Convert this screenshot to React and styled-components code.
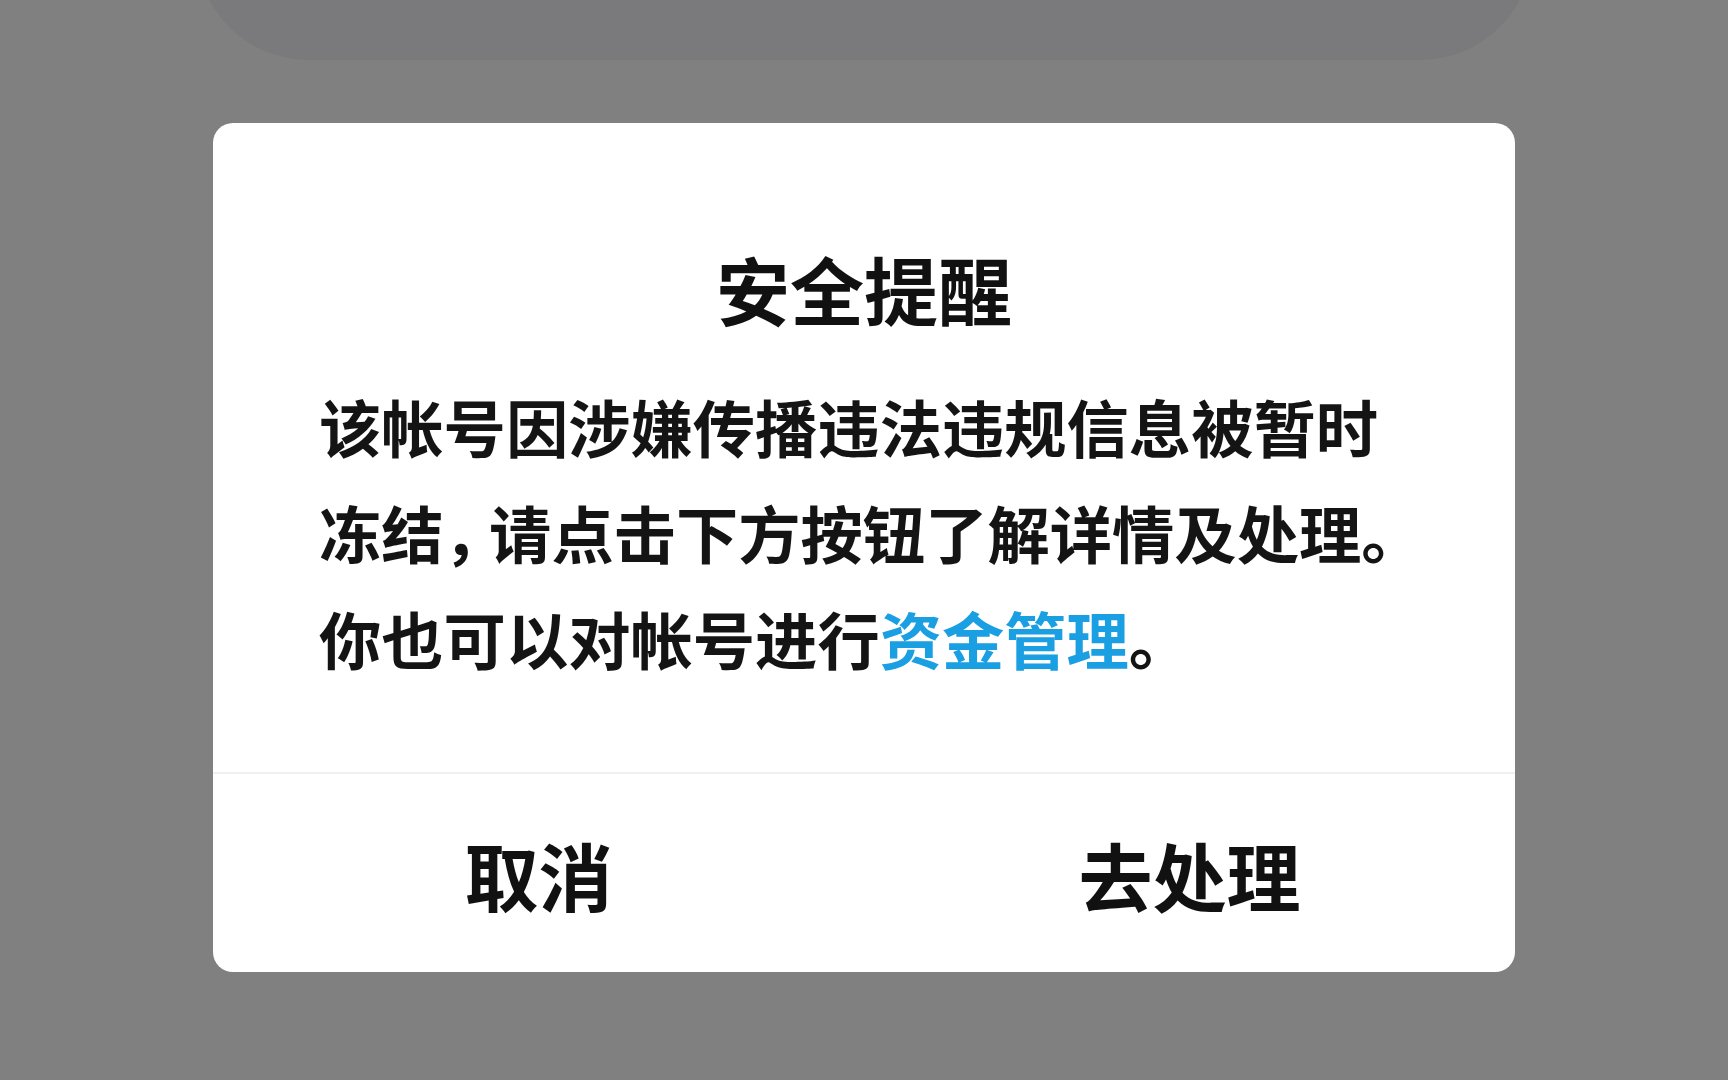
import React from "react";
import styled, { createGlobalStyle } from "styled-components";

const Global = createGlobalStyle`
  html, body { margin: 0; padding: 0; background: #808080; }
  body { font-family: "Noto Sans CJK SC", "Noto Sans", sans-serif; }
  * { box-sizing: border-box; }
`;

const Page = styled.div`
  width: 1728px;
  height: 1080px;
  background: #808080;
  overflow: hidden;
`;

const TopSheet = styled.div`
  width: 1337px;
  height: 180px;
  margin: -120px auto 0;
  background: #7a7a7c;
  border-radius: 0 0 113px 113px;
`;

const Dialog = styled.div`
  width: 1302px;
  height: 849px;
  margin: 63px auto 0;
  background: #ffffff;
  border-radius: 20px;
  display: flex;
  flex-direction: column;
  overflow: hidden;
`;

const Content = styled.div`
  padding: 115px 106px 81px;
  display: flex;
  flex-direction: column;
`;

const Title = styled.div`
  font-size: 74px;
  line-height: 100px;
  font-weight: 700;
  color: #111111;
  text-align: center;
`;

const Body = styled.div`
  margin-top: 35px;
  font-size: 62.3px;
  line-height: 106px;
  font-weight: 700;
  color: #141414;
`;

const Line = styled.div`
  white-space: nowrap;
`;

const Punct = styled.span`
  letter-spacing: -0.27em;
`;

const Link = styled.span`
  color: #1a9fe3;
`;

const Footer = styled.div`
  flex: 1;
  border-top: 2px solid #f0f0f0;
  display: grid;
  grid-template-columns: 1fr 1fr;
`;

const Action = styled.button`
  border: none;
  background: transparent;
  font-family: inherit;
  font-size: 74px;
  font-weight: 700;
  color: #111111;
  display: flex;
  align-items: center;
  justify-content: center;
  padding: 0;
  cursor: pointer;
`;

export default function App() {
  return (
    <>
      <Global />
      <Page>
        <TopSheet />
        <Dialog>
          <Content>
            <Title>安全提醒</Title>
            <Body>
              <Line>该帐号因涉嫌传播违法违规信息被暂时</Line>
              <Line>
                冻结<Punct>，</Punct>请点击下方按钮了解详情及处理。
              </Line>
              <Line>
                你也可以对帐号进行<Link>资金管理</Link>。
              </Line>
            </Body>
          </Content>
          <Footer>
            <Action>取消</Action>
            <Action>去处理</Action>
          </Footer>
        </Dialog>
      </Page>
    </>
  );
}
